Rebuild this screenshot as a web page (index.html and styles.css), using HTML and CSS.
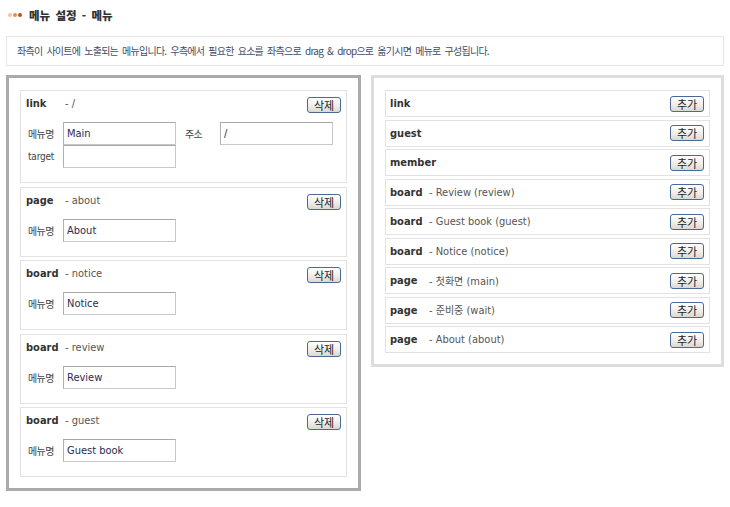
FILE: index.html
```html
<!DOCTYPE html>
<html lang="ko">
<head>
  <meta charset="UTF-8" />
  <meta name="viewport" content="width=device-width, initial-scale=1.0"/>
  <title>메뉴 설정 - 메뉴</title>
  <link rel="stylesheet" href="styles.css">
</head>
<body>
  <div class="wrap">
    <h1 class="page-title"><span class="dots"><i></i><i></i><i></i></span>메뉴 설정 - 메뉴</h1>

    <p class="notice">좌측이 사이트에 노출되는 메뉴입니다. 우측에서 필요한 요소를 좌측으로 drag &amp; drop으로 옮기시면 메뉴로 구성됩니다.</p>

    <div class="columns">
      <!-- 사이트 메뉴 -->
      <div class="panel panel-menu">
        <div class="menu-item">
          <div class="item-head">
            <span class="type">link</span>
            <span class="desc">- /</span>
            <button class="btn">삭제</button>
          </div>
          <div class="field-row">
            <label>메뉴명</label><input type="text" value="Main">
            <label class="addr">주소</label><input type="text" value="/">
          </div>
          <div class="field-row">
            <label class="latin">target</label><input type="text" value="">
          </div>
        </div>

        <div class="menu-item">
          <div class="item-head">
            <span class="type">page</span>
            <span class="desc">- about</span>
            <button class="btn">삭제</button>
          </div>
          <div class="field-row">
            <label>메뉴명</label><input type="text" value="About">
          </div>
        </div>

        <div class="menu-item">
          <div class="item-head">
            <span class="type">board</span>
            <span class="desc">- notice</span>
            <button class="btn">삭제</button>
          </div>
          <div class="field-row">
            <label>메뉴명</label><input type="text" value="Notice">
          </div>
        </div>

        <div class="menu-item">
          <div class="item-head">
            <span class="type">board</span>
            <span class="desc">- review</span>
            <button class="btn">삭제</button>
          </div>
          <div class="field-row">
            <label>메뉴명</label><input type="text" value="Review">
          </div>
        </div>

        <div class="menu-item">
          <div class="item-head">
            <span class="type">board</span>
            <span class="desc">- guest</span>
            <button class="btn">삭제</button>
          </div>
          <div class="field-row">
            <label>메뉴명</label><input type="text" value="Guest book">
          </div>
        </div>
      </div>

      <!-- 추가 가능한 요소 -->
      <div class="panel panel-source">
        <div class="source-item"><span class="type">link</span><button class="btn">추가</button></div>
        <div class="source-item"><span class="type">guest</span><button class="btn">추가</button></div>
        <div class="source-item"><span class="type">member</span><button class="btn">추가</button></div>
        <div class="source-item"><span class="type">board</span><span class="desc">- Review (review)</span><button class="btn">추가</button></div>
        <div class="source-item"><span class="type">board</span><span class="desc">- Guest book (guest)</span><button class="btn">추가</button></div>
        <div class="source-item"><span class="type">board</span><span class="desc">- Notice (notice)</span><button class="btn">추가</button></div>
        <div class="source-item"><span class="type">page</span><span class="desc">- <span class="ko">첫화면</span> (main)</span><button class="btn">추가</button></div>
        <div class="source-item"><span class="type">page</span><span class="desc">- <span class="ko">준비중</span> (wait)</span><button class="btn">추가</button></div>
        <div class="source-item"><span class="type">page</span><span class="desc">- About (about)</span><button class="btn">추가</button></div>
      </div>
    </div>
  </div>
</body>
</html>
```

FILE: styles.css
```css
body {
  margin: 0;
  background: #fff;
  font-family: "DejaVu Sans Condensed", "DejaVu Sans", "Noto Sans CJK KR", sans-serif;
  font-stretch: condensed;
  font-size: 11px;
  color: #333;
}

.wrap {
  width: 718px;
  padding: 0 6px;
}

.page-title {
  display: flex;
  align-items: center;
  margin: 0;
  padding: 8px 2px 0;
  height: 14px;
  font-family: "Noto Sans CJK KR", sans-serif;
  font-size: 11.5px;
  font-weight: 900;
  word-spacing: 2px;
  color: #333;
}

.dots {
  display: flex;
  gap: 1px;
  margin-right: 7px;
}

.dots i {
  width: 4px;
  height: 4px;
  border-radius: 50%;
  background: #f7c39c;
}

.dots i:nth-child(2) {
  background: #ec8a4f;
}

.dots i:nth-child(3) {
  background: #c94a22;
}

.notice {
  margin: 14px 0 9px;
  padding: 0 10px;
  height: 28px;
  line-height: 28px;
  border: 1px solid #e6e6e6;
  font-family: "Noto Sans CJK KR", sans-serif;
  font-size: 10px;
  letter-spacing: -0.75px;
  word-spacing: 2px;
  color: #3f4d6b;
}

.columns {
  display: grid;
  grid-template-columns: 355px 353px;
  gap: 10px;
  align-items: start;
}

.panel {
  display: flex;
  flex-direction: column;
  padding: 12px 11px 11px;
  background: #fff;
}

.panel-menu {
  border: 3px solid #aaa;
  gap: 3.5px;
}

.panel-source {
  border: 3px solid #ddd;
  gap: 2.5px;
}

.menu-item {
  border: 1px solid #e2e2e2;
  padding: 6px 5px 14px;
}

.item-head {
  display: flex;
  align-items: flex-start;
  height: 16px;
  margin-bottom: 9px;
}

.type {
  flex: none;
  width: 39px;
  font-weight: bold;
  line-height: 13px;
  color: #333;
}

.desc {
  line-height: 13px;
  color: #555;
}

.ko {
  font-family: "Noto Sans CJK KR", sans-serif;
  font-size: 10px;
}

.field-row {
  display: flex;
  align-items: center;
}

.field-row label {
  width: 35px;
  padding-left: 2px;
  font-family: "Noto Sans CJK KR", sans-serif;
  font-size: 10px;
  letter-spacing: -0.6px;
  color: #444;
}

.field-row label.latin {
  font-family: "DejaVu Sans Condensed", "DejaVu Sans", sans-serif;
  font-size: 10px;
  letter-spacing: -0.2px;
}

.field-row label.addr {
  margin-left: 7px;
}

.field-row input {
  box-sizing: border-box;
  width: 113px;
  height: 23px;
  margin: 0;
  padding: 0 3px;
  border: 1px solid #c8c8c8;
  border-top-color: #a8a8a8;
  border-left-color: #b0b0b0;
  font-family: "DejaVu Sans Condensed", "DejaVu Sans", sans-serif;
  font-stretch: condensed;
  font-size: 11px;
  color: #2b2b4d;
  outline: none;
}

.source-item {
  display: flex;
  align-items: center;
  box-sizing: border-box;
  height: 27px;
  padding: 0 5px 0 4px;
  border: 1px solid #e2e2e2;
}

.btn {
  flex: none;
  margin-left: auto;
  width: 34px;
  height: 16px;
  padding: 0;
  border: 1px solid #4a6a92;
  border-radius: 3px;
  background: linear-gradient(#ffffff, #efeeea 55%, #d9d8d1);
  font-family: "Noto Sans CJK KR", sans-serif;
  font-size: 11px;
  line-height: 14px;
  color: #222;
  cursor: pointer;
}
```
